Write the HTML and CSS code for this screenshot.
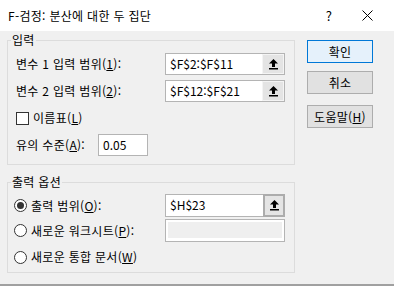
FILE: index.html
```html
<!DOCTYPE html>
<html lang="ko">
<head>
    <meta charset="UTF-8">
    <meta name="viewport" content="width=device-width, initial-scale=1.0">
    <title>F-검정: 분산에 대한 두 집단</title>
    <link rel="stylesheet" href="styles.css">
</head>
<body>
    <div class="window">
        <div class="titlebar">
            <span class="title">F-검정: 분산에 대한 두 집단</span>
            <span class="help">?</span>
            <span class="close">
                <svg width="11" height="11" viewBox="0 0 11 11"><path d="M0.5 0.5 L10.5 10.5 M10.5 0.5 L0.5 10.5" stroke="#000" stroke-width="1"/></svg>
            </span>
        </div>
        <div class="content">
            <div class="groups">
                <fieldset class="group group-input">
                    <legend>입력</legend>
                    <div class="row">
                        <label class="label">변수 1 입력 범위(<u>1</u>):</label>
                        <div class="ref">
                            <span class="ref-text">$F$2:$F$11</span>
                            <span class="ref-btn">
                                <svg width="9" height="11" viewBox="0 0 9 11"><path d="M4.5 0 L9 4.5 H6 V8 H3 V4.5 H0 Z"/><rect x="0" y="9" width="9" height="1.5"/></svg>
                            </span>
                        </div>
                    </div>
                    <div class="row row-gap">
                        <label class="label">변수 2 입력 범위(<u>2</u>):</label>
                        <div class="ref">
                            <span class="ref-text">$F$12:$F$21</span>
                            <span class="ref-btn">
                                <svg width="9" height="11" viewBox="0 0 9 11"><path d="M4.5 0 L9 4.5 H6 V8 H3 V4.5 H0 Z"/><rect x="0" y="9" width="9" height="1.5"/></svg>
                            </span>
                        </div>
                    </div>
                    <div class="row row-gap">
                        <span class="checkbox"></span>
                        <label class="check-label">이름표(<u>L</u>)</label>
                    </div>
                    <div class="row row-gap">
                        <label class="label label-short">유의 수준(<u>A</u>):</label>
                        <div class="textbox">0.05</div>
                    </div>
                </fieldset>

                <fieldset class="group group-output">
                    <legend>출력 옵션</legend>
                    <div class="row row-radio">
                        <span class="radio checked"></span>
                        <label class="radio-label">출력 범위(<u>O</u>):</label>
                        <div class="ref">
                            <span class="ref-text">$H$23</span>
                            <span class="ref-btn focused">
                                <svg width="9" height="11" viewBox="0 0 9 11"><path d="M4.5 0 L9 4.5 H6 V8 H3 V4.5 H0 Z"/><rect x="0" y="9" width="9" height="1.5"/></svg>
                            </span>
                        </div>
                    </div>
                    <div class="row row-radio row-gap-small">
                        <span class="radio"></span>
                        <label class="radio-label">새로운 워크시트(<u>P</u>):</label>
                        <div class="ref ref-disabled"><span class="ref-fill"></span></div>
                    </div>
                    <div class="row row-radio row-gap-last">
                        <span class="radio"></span>
                        <label class="radio-label">새로운 통합 문서(<u>W</u>)</label>
                    </div>
                </fieldset>
            </div>

            <div class="buttons">
                <button class="btn btn-default">확인</button>
                <button class="btn btn-cancel">취소</button>
                <button class="btn btn-help">도움말(<u>H</u>)</button>
            </div>
        </div>
    </div>
</body>
</html>
```

FILE: styles.css
```css
body {
    margin: 0;
    font-family: "Noto Sans CJK KR", "Noto Sans", sans-serif;
    font-size: 12px;
    letter-spacing: 0.3px;
    color: #000;
    background-color: #fff;
}
.window {
    width: 394px;
    height: 286px;
    box-sizing: border-box;
    background-color: #f0f0f0;
    border-bottom: 2px solid #a0a0a0;
}
.titlebar {
    height: 31px;
    display: flex;
    align-items: center;
    padding-left: 8px;
    background-color: #fff;
}
.title {
    flex: 1;
    line-height: 16px;
}
.help {
    width: 30px;
    text-align: center;
    font-size: 13px;
}
.close {
    width: 46px;
    margin-right: 4px;
    display: flex;
    justify-content: center;
}
.content {
    display: flex;
    padding: 1px 0 0 7px;
}
.groups {
    width: 288px;
}
.group {
    margin: 0;
    padding: 5px 9px 8px 8px;
    border: 1px solid #dcdcdc;
    min-width: 0;
}
.group legend {
    padding: 0 1px;
    margin-left: -5px;
    line-height: 16px;
}
.group-output {
    margin-top: 9px;
    padding-top: 4px;
    padding-bottom: 4px;
}
.row {
    display: flex;
    align-items: center;
    height: 22px;
}
.row-gap {
    margin-top: 5px;
}
.row-radio {
    height: 23px;
    margin-left: -2px;
}
.row-gap-small {
    margin-top: 2px;
}
.row-gap-last {
    height: 22px;
    margin-top: 4px;
}
.label {
    line-height: 16px;
}
.label-short {
    width: 82px;
}
.ref {
    margin-left: auto;
    width: 120px;
    height: 100%;
    box-sizing: border-box;
    border: 1px solid #b4b4b4;
    background-color: #fff;
    display: flex;
}
.ref-text {
    flex: 1;
    padding-left: 4px;
    line-height: 20px;
    letter-spacing: 0;
}
.ref-btn {
    width: 22px;
    box-sizing: border-box;
    background-color: #e4e4e4;
    border: 1px solid #f4f4f4;
    display: flex;
    align-items: center;
    justify-content: center;
}
.ref-btn.focused {
    border: 2px solid #acacac;
    margin: -1px -1px -1px 0;
}
.ref-disabled {
    padding: 2px 2px 3px 2px;
}
.ref-fill {
    flex: 1;
    background-color: #efefef;
}
.textbox {
    width: 50px;
    height: 22px;
    box-sizing: border-box;
    border: 1px solid #b4b4b4;
    background-color: #fff;
    padding-left: 4px;
    line-height: 20px;
    letter-spacing: 0;
}
.checkbox {
    width: 13px;
    height: 13px;
    box-sizing: border-box;
    border: 1px solid #333;
    background-color: #fff;
}
.check-label {
    margin-left: 4px;
    line-height: 16px;
}
.radio {
    width: 13px;
    height: 13px;
    box-sizing: border-box;
    border: 1px solid #333;
    border-radius: 50%;
    background-color: #fff;
    display: flex;
    align-items: center;
    justify-content: center;
}
.radio.checked::after {
    content: "";
    width: 7px;
    height: 7px;
    border-radius: 50%;
    background-color: #333;
}
.radio-label {
    margin-left: 4px;
    line-height: 16px;
}
.buttons {
    display: flex;
    flex-direction: column;
    margin-left: 12px;
    padding-top: 8px;
}
.btn {
    width: 66px;
    height: 23px;
    padding: 0;
    font: inherit;
    letter-spacing: inherit;
    color: #000;
    line-height: 19px;
    border: 1px solid #adadad;
    background-color: #e1e1e1;
}
.btn-default {
    border-color: #0078d7;
    background-color: #e5f1fb;
}
.btn-cancel {
    margin-top: 8px;
}
.btn-help {
    margin-top: 11px;
}
```
